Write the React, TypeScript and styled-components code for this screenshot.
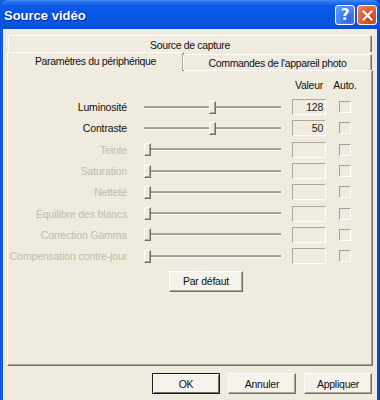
import React from 'react';
import styled, {createGlobalStyle, css} from 'styled-components';

const GlobalStyle = createGlobalStyle`
    html, body {
        margin: 0;
        padding: 0;
        background: #0a4fd8;
    }
    * {
        box-sizing: border-box;
    }
`;

const FACE = '#efebde';
const SHADOW = '#aca899';
const DARK = '#716f64';

interface IRow {
    label: string;
    enabled: boolean;
    value?: string;
    percent: number;
}

const rows: IRow[] = [
    {label: 'Luminosité', enabled: true, value: '128', percent: 50},
    {label: 'Contraste', enabled: true, value: '50', percent: 50},
    {label: 'Teinte', enabled: false, percent: 0},
    {label: 'Saturation', enabled: false, percent: 0},
    {label: 'Netteté', enabled: false, percent: 0},
    {label: 'Équilibre des blancs', enabled: false, percent: 0},
    {label: 'Correction Gamma', enabled: false, percent: 0},
    {label: 'Compensation contre-jour', enabled: false, percent: 0},
];

/**
 * Source vidéo dialog
 */
const App = () => {
    return <>
        <GlobalStyle/>
        <Window>
            <TitleBar>
                <Title>Source vidéo</Title>
                <TitleButtons>
                    <CaptionButton $variant="help">?</CaptionButton>
                    <CaptionButton $variant="close">
                        <svg width="11" height="11" viewBox="0 0 11 11">
                            <path d="M1.5 1.5 L9.5 9.5 M9.5 1.5 L1.5 9.5" stroke="#fff" strokeWidth="2.2" strokeLinecap="square"/>
                        </svg>
                    </CaptionButton>
                </TitleButtons>
            </TitleBar>

            <Client>
                <TabRowBack>
                    <Tab $wide>Source de capture</Tab>
                </TabRowBack>
                <TabRowFront>
                    <Tab $selected style={{width: 177}}>Paramètres du périphérique</Tab>
                    <Tab $front>Commandes de l'appareil photo</Tab>
                </TabRowFront>

                <Panel>
                    <SettingsGrid>
                        <span/>
                        <span/>
                        <HeaderCell $width={34}>Valeur</HeaderCell>
                        <HeaderCell $width={12}>Auto.</HeaderCell>

                        {rows.map(row => (
                            <React.Fragment key={row.label}>
                                <Label $enabled={row.enabled}>{row.label}</Label>
                                <Slider>
                                    <Track/>
                                    <Thumb style={{left: `${row.percent}%`, marginLeft: `${-row.percent * 0.07}px`}}/>
                                </Slider>
                                <ValueBox>{row.value}</ValueBox>
                                <CheckBox/>
                            </React.Fragment>
                        ))}
                    </SettingsGrid>
                    <DefaultRow>
                        <Button $width={74}>Par défaut</Button>
                    </DefaultRow>
                </Panel>

                <Footer>
                    <Button $default>OK</Button>
                    <Button>Annuler</Button>
                    <Button>Appliquer</Button>
                </Footer>
            </Client>
        </Window>
    </>;
};

export default App;



const Window = styled.div`
    width: 380px;
    height: 400px;
    overflow: hidden;
    display: flex;
    flex-direction: column;
    background: linear-gradient(to right, #0a4fd8 0, #1f62e6 2px, #0a4fd8 3px, #0a4fd8 377px, #063fc0 380px);
    font-family: "Liberation Sans", Arial, sans-serif;
    font-size: 10.5px;
    letter-spacing: -0.25px;
    color: #111;
`;

const TitleBar = styled.div`
    height: 29px;
    flex: none;
    display: flex;
    align-items: center;
    justify-content: space-between;
    padding: 0 3px 0 4px;
    border-radius: 7px 7px 0 0;
    background: linear-gradient(to bottom, #3d8cf6 0, #2a72ee 2px, #0e5ae6 6px, #0556e3 16px, #0a55e0 24px, #0a4bd2 29px);
`;

const Title = styled.div`
    font-family: "Liberation Sans", Arial, sans-serif;
    font-weight: bold;
    font-size: 13px;
    letter-spacing: 0;
    color: #fff;
    text-shadow: 1px 1px 0 #0a2a8a;
    margin-top: 1px;
`;

const TitleButtons = styled.div`
    display: flex;
    gap: 2px;
    margin-top: 1px;
`;

const CaptionButton = styled.div<{$variant: 'help' | 'close'}>`
    width: 20px;
    height: 20px;
    border: 1px solid #fff;
    border-radius: 3px;
    display: flex;
    align-items: center;
    justify-content: center;
    color: #fff;
    font-family: "DejaVu Sans", sans-serif;
    font-weight: bold;
    font-size: 15px;
    letter-spacing: 0;
    line-height: 1;

    ${props => props.$variant === 'help' ? css`
        background: radial-gradient(circle at 70% 75%, #2a64e8 0, #3f7ef0 40%, #6a9cf8 100%);
    ` : css`
        background: radial-gradient(circle at 70% 75%, #c4401d 0, #de5a2c 45%, #ef8c66 100%);
    `}
`;

const Client = styled.div`
    flex: 1;
    margin: 0 3px;
    background: ${FACE};
    padding: 6px 4px 0 4px;
    display: flex;
    flex-direction: column;
`;

const TabRowBack = styled.div`
    display: flex;
    padding-left: 1px;
    padding-right: 1px;
    height: 17px;
`;

const TabRowFront = styled.div`
    display: flex;
    height: 18px;
    align-items: flex-end;
    padding-right: 1px;
    position: relative;
    z-index: 1;
`;

const Tab = styled.div<{$selected?: boolean, $wide?: boolean, $front?: boolean}>`
    display: flex;
    align-items: center;
    justify-content: center;
    white-space: nowrap;
    letter-spacing: -0.35px;
    border-top: 1px solid #fff;
    border-left: 1px solid #fff;
    border-right: 1px solid ${DARK};
    box-shadow: inset -1px 0 0 ${SHADOW};
    border-radius: 2px 2px 0 0;
    background: ${FACE};
    ${props => props.$wide && css`
        flex: 1;
        height: 17px;
        padding-top: 1px;
    `}
    ${props => props.$front && css`
        flex: 1;
        height: 16px;
        margin-left: -1px;
        padding-top: 1px;
    `}
    ${props => props.$selected && css`
        height: 19px;
        margin-bottom: -1px;
        padding-bottom: 3px;
    `}
`;

const Panel = styled.div`
    height: 296px;
    flex: none;
    border-top: 1px solid #fff;
    border-left: 1px solid #fff;
    border-right: 1px solid ${DARK};
    border-bottom: 1px solid ${DARK};
    box-shadow: inset -1px -1px 0 ${SHADOW};
    padding-top: 3px;
`;

const SettingsGrid = styled.div`
    display: grid;
    grid-template-columns: 119px 154px 45px 25px;
    grid-template-rows: 22.5px repeat(8, 21.3px);
    align-items: center;
`;

const HeaderCell = styled.div<{$width: number}>`
    justify-self: end;
    width: ${props => props.$width}px;
    display: flex;
    justify-content: center;
    white-space: nowrap;
`;

const Label = styled.div<{$enabled: boolean}>`
    text-align: right;
    white-space: nowrap;
    letter-spacing: -0.15px;
    color: ${props => props.$enabled ? '#111' : '#c0bcab'};
`;

const Slider = styled.div`
    position: relative;
    margin-left: 17px;
    height: 13px;
`;

const Track = styled.div`
    position: absolute;
    left: 0;
    right: 0;
    top: 5px;
    height: 2px;
    background: #9d9a8c;
    border-top: 1px solid ${SHADOW};
    box-shadow: 0 1px 0 #fff;
`;

const Thumb = styled.div`
    position: absolute;
    top: 0;
    width: 7px;
    height: 13px;
    background: ${FACE};
    border-top: 1px solid #fff;
    border-left: 1px solid #fff;
    border-right: 1px solid ${DARK};
    border-bottom: 1px solid ${DARK};
    box-shadow: inset -1px -1px 0 ${SHADOW};
`;

const ValueBox = styled.div`
    justify-self: end;
    width: 34px;
    height: 16px;
    border-top: 1px solid ${SHADOW};
    border-left: 1px solid ${SHADOW};
    border-right: 1px solid #fff;
    border-bottom: 1px solid #fff;
    text-align: right;
    padding-right: 2px;
    line-height: 14px;
    color: #222;
`;

const CheckBox = styled.div`
    justify-self: end;
    width: 12px;
    height: 12px;
    border-top: 1px solid #a39f8e;
    border-left: 1px solid #a39f8e;
    border-right: 1px solid #fff;
    border-bottom: 1px solid #fff;
`;

const DefaultRow = styled.div`
    display: flex;
    padding-left: 161px;
    margin-top: 4px;
`;

const Button = styled.div<{$default?: boolean, $width?: number}>`
    width: ${props => props.$width ?? 68}px;
    height: 21px;
    display: flex;
    align-items: center;
    justify-content: center;
    white-space: nowrap;
    background: #f4f2ea;
    border-top: 1px solid #fff;
    border-left: 1px solid #fff;
    border-right: 1px solid ${DARK};
    border-bottom: 1px solid ${DARK};
    box-shadow: inset -1px -1px 0 ${SHADOW};

    ${props => props.$default && css`
        border: 1px solid #1a1a1a;
        box-shadow: inset 1px 1px 0 #fff, inset -1px -1px 0 ${DARK};
    `}
`;

const Footer = styled.div`
    display: flex;
    justify-content: flex-end;
    gap: 8px;
    padding: 7px 1px 0 0;
`;
